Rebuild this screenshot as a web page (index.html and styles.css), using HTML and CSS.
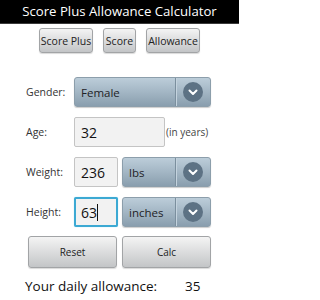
FILE: index.html
```html
<!DOCTYPE html>
<html>
<head>
<meta charset="utf-8">
<link rel="stylesheet" href="styles.css">
</head>
<body>
<div class="page">
<div class="titlebar">Score Plus Allowance Calculator</div>
<div class="tabs">
  <button class="btn tab tab-wide">Score Plus</button>
  <button class="btn tab tab-narrow">Score</button>
  <button class="btn tab tab-wide">Allowance</button>
</div>
<div class="form">
  <div class="row">
    <span class="label">Gender:</span>
    <div class="select select-full">
      <span class="select-text">Female</span>
      <span class="select-arrow"><span class="circle"><svg width="10" height="7" viewBox="0 0 10 7"><path d="M1.5 1.5 L5 5 L8.5 1.5" fill="none" stroke="#fff" stroke-width="2" stroke-linecap="round" stroke-linejoin="round"/></svg></span></span>
    </div>
  </div>
  <div class="row">
    <span class="label">Age:</span>
    <div class="input input-age">32</div>
    <span class="hint">(in years)</span>
  </div>
  <div class="row">
    <span class="label">Weight:</span>
    <div class="input input-small">236</div>
    <div class="select select-unit">
      <span class="select-text">lbs</span>
      <span class="select-arrow"><span class="circle"><svg width="10" height="7" viewBox="0 0 10 7"><path d="M1.5 1.5 L5 5 L8.5 1.5" fill="none" stroke="#fff" stroke-width="2" stroke-linecap="round" stroke-linejoin="round"/></svg></span></span>
    </div>
  </div>
  <div class="row">
    <span class="label">Height:</span>
    <div class="input input-small focused">63<span class="caret"></span></div>
    <div class="select select-unit">
      <span class="select-text">inches</span>
      <span class="select-arrow"><span class="circle"><svg width="10" height="7" viewBox="0 0 10 7"><path d="M1.5 1.5 L5 5 L8.5 1.5" fill="none" stroke="#fff" stroke-width="2" stroke-linecap="round" stroke-linejoin="round"/></svg></span></span>
    </div>
  </div>
</div>
<div class="actions">
  <button class="btn action">Reset</button>
  <button class="btn action">Calc</button>
</div>
<div class="result">
  <span class="result-label">Your daily allowance:</span>
  <span class="result-value">35</span>
</div>
</div>
</body>
</html>
```
FILE: styles.css
```css
html, body {
  margin: 0;
  padding: 0;
  background: #fff;
  font-family: "Open Sans", "Liberation Sans", sans-serif;
  color: #222;
}
.page {
  width: 239px;
  height: 300px;
  overflow: hidden;
}
.titlebar {
  height: 23px;
  background: #000;
  color: #fff;
  font-size: 13.2px;
  line-height: 23px;
  text-align: center;
  border-bottom: 1px solid #3a3a3a;
}
.btn {
  font-family: "Open Sans", "Liberation Sans", sans-serif;
  color: #222;
  background: linear-gradient(#f4f4f4, #d9dadb 55%, #c3c5c7);
  border: 1px solid #a2a4a6;
  border-radius: 3px;
  box-shadow: 0 1px 1px rgba(0,0,0,0.15);
  padding: 0;
  margin: 0;
}
.tabs {
  display: flex;
  justify-content: center;
  gap: 10px;
  margin-top: 4px;
}
.tab {
  height: 25px;
  font-size: 10.5px;
}
.tab-wide { width: 54px; }
.tab-narrow { width: 33px; }
.form {
  display: flex;
  flex-direction: column;
  gap: 10px;
  margin-top: 24px;
  padding-left: 26px;
}
.row {
  display: flex;
  align-items: center;
  height: 30px;
}
.label {
  width: 48px;
  font-size: 10.5px;
  color: #333;
}
.select {
  display: flex;
  height: 30px;
  box-sizing: border-box;
  border: 1px solid #8c9eab;
  border-radius: 3px;
  background: linear-gradient(#bccdd9, #a3b6c4 50%, #899eae);
  box-shadow: 0 1px 1px rgba(0,0,0,0.2);
}
.select-full { width: 137px; }
.select-unit { width: 89px; margin-left: 4px; }
.select-text {
  flex: 1;
  display: flex;
  align-items: center;
  padding-left: 6px;
  font-size: 11.5px;
  color: #1e2226;
}
.select-arrow {
  width: 34px;
  display: flex;
  align-items: center;
  justify-content: center;
  border-left: 1px solid #7b8f9e;
  box-shadow: inset 1px 0 0 #c4d3de;
}
.circle {
  width: 20px;
  height: 20px;
  border-radius: 50%;
  background: #5d7284;
  display: flex;
  align-items: center;
  justify-content: center;
}
.input {
  height: 30px;
  box-sizing: border-box;
  border: 1px solid #c4c4c4;
  border-radius: 2px;
  background: #f2f2f2;
  font-size: 14px;
  color: #111;
  display: flex;
  align-items: center;
  padding-left: 6px;
}
.input-age { width: 91px; }
.input-small { width: 44px; }
.focused {
  border: 2px solid #3ca9d3;
  padding-left: 5px;
  box-shadow: 0 0 1px #7fd0ee;
}
.caret {
  display: inline-block;
  width: 1px;
  height: 17px;
  background: #111;
}
.hint {
  font-size: 10px;
  color: #444;
  margin-left: 1px;
}
.actions {
  display: flex;
  gap: 5px;
  margin-top: 9px;
  padding-left: 28px;
}
.action {
  width: 89px;
  height: 32px;
  font-size: 10px;
}
.result {
  display: flex;
  margin-top: 9px;
  padding-left: 25px;
  font-size: 13.5px;
  color: #111;
}
.result-label { width: 160px; }
```
